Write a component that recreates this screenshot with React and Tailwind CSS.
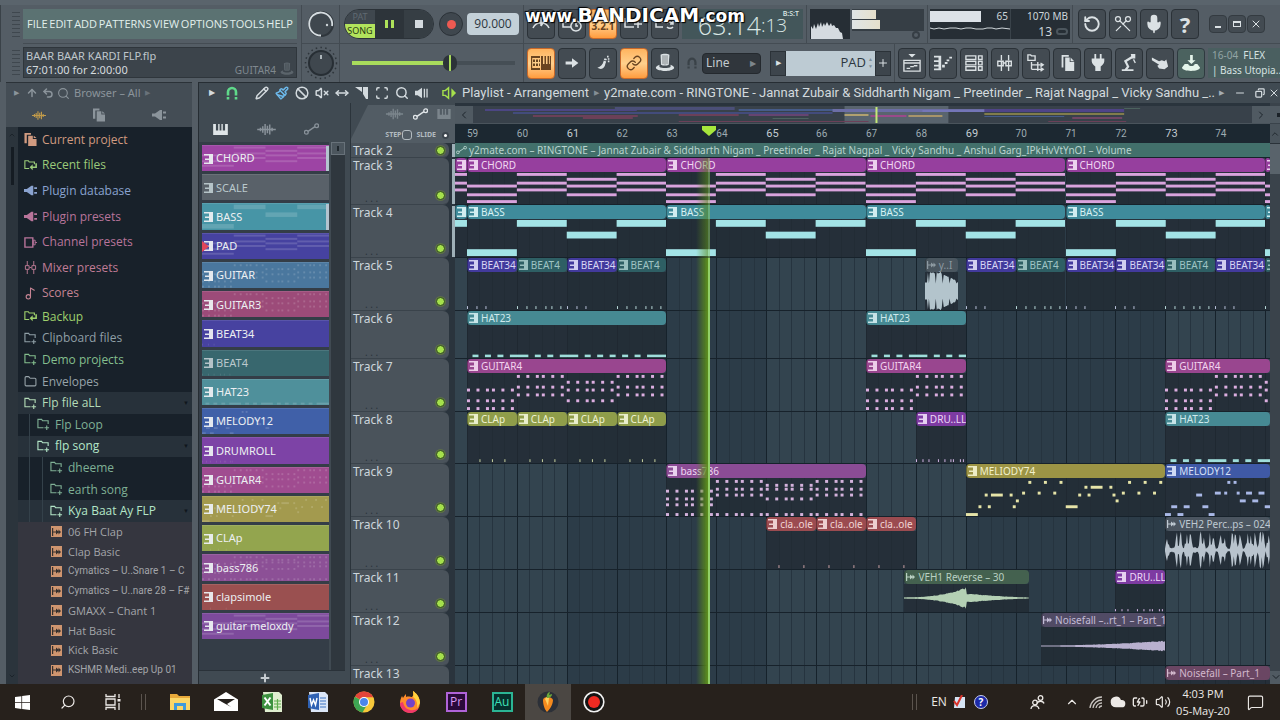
import React, { useState } from 'react';
import {
    Search, Pencil, Ban, VolumeX, MoveHorizontal, Scan, Volume1, Volume2, Undo2, ArrowUp,
    RotateCw, Scissors, Mic, Link, Plus, Minus, X, Copy, ChevronUp, ChevronDown, ChevronLeft, ChevronRight, Music2, Folder,
    Paintbrush, MessageSquare, Cloud, BatteryCharging
} from 'lucide-react';

/* ---------- timeline data ---------- */

const FIRST_BAR = 58.76;
const BARS_SHOWN = 16.34;
const pct = (bars) => `${(bars / BARS_SHOWN) * 100}%`;
const barLeft = (bar) => pct(bar - FIRST_BAR);

const STEPS = [0, 0.19, 0.38, 0.5, 0.69, 0.88];

// Each pattern is a list of [bar offset, length in bars, y, height]
const block = (rows, height) => rows.flatMap((ys, bar) => ys.map((y) => [bar, 1, y, height]));
const dots = (rows) => rows.flatMap((ys, bar) => STEPS.flatMap((s) => ys.map((y) => [bar + s, 0.06, y, 3])));
const ticks = (times) => times.map((x) => [x, 0.02, 35, 3]);
const steps = (list) => list.map(([s, len, y]) => [s / 16, (len * 0.95) / 16, y, 3]);

const HAT_HITS = [0.11, 0.36, 0.61, 1.36, 1.61, 2.36, 2.61, 2.86, 3.11, 3.36].map((x) => [x, 0.12, 35, 3])
    .concat([[0.86, 0.37, 35, 3], [1.86, 0.37, 35, 3], [3.61, 0.39, 35, 3]]);

const NOTES = {
    chord: block([[13, 22, 29], [1, 10, 17], [6, 13, 22], [1, 10, 17]], 3),
    bass: block([[31], [1], [13], [1]], 7),
    beat34: ticks([0, 0.19, 0.37]),
    beat4: ticks([0, 0.19, 0.37, 0.57, 0.69, 0.87]),
    hat: HAT_HITS,
    guitar4: dots([[16, 27, 35], [2, 13, 21], [8, 16, 27], [2, 13, 21]]),
    clap: ticks([0.25, 0.5, 0.75]),
    drum: ticks([0, 0.13, 0.25, 0.44, 0.57, 0.69, 0.74, 0.88, 0.94]),
    bass786: dots([[12, 20, 26, 36], [2, 10, 16, 36], [6, 10, 20, 36], [2, 10, 16, 36]]),
    clapsimole: ticks([0.25, 0.75]),
    melody74: steps([
        [0, 4, 36], [4, 1, 28], [6, 1, 16], [7, 1, 28], [8, 4, 16], [14, 1, 16], [15, 1, 28], [16, 1, 22], [18, 1, 14], [20, 1, 3],
        [23, 1, 14], [25, 1, 3], [28, 1, 14], [30, 1, 3], [32, 4, 28], [36, 1, 16], [38, 1, 8], [39, 1, 16], [40, 4, 8], [46, 1, 8],
        [47, 1, 16], [48, 1, 22], [50, 1, 14], [52, 1, 3], [55, 1, 14], [57, 1, 3], [60, 1, 14], [62, 1, 3]
    ]),
    melody12: steps([
        [0, 2, 36], [2, 2, 28], [4, 2, 36], [6, 2, 28], [10, 2, 16], [12, 2, 28], [14, 2, 36], [16, 2, 14], [19, 1, 14], [20, 1, 3],
        [22, 1, 3], [23, 1, 14], [24, 2, 22], [26, 2, 14], [28, 2, 22], [30, 2, 14], [32, 2, 28]
    ]),
    none: []
};

const KINDS = {
    chord: { label: 'CHORD', head: 'bg-[#963f9e]', note: '#d9a3dd', notes: NOTES.chord, view: 33, text: 'text-[#f0d8f2]' },
    bass: { label: 'BASS', head: 'bg-[#3f8b9b]', note: '#a3e3e6', notes: NOTES.bass, text: 'text-[#d8f2f4]' },
    beat34: { label: 'BEAT34', head: 'bg-[#423a9c]', note: '#b8c0d8', notes: NOTES.beat34, text: 'text-[#d8d6f4]' },
    beat4: { label: 'BEAT4', head: 'bg-[#2e5f64]', note: '#b8d8d8', notes: NOTES.beat4, text: 'text-[#9fc4c4]' },
    hat: { label: 'HAT23', head: 'bg-[#468993]', note: '#9fdedb', notes: NOTES.hat, text: 'text-[#cfe9ec]' },
    guitar4: { label: 'GUITAR4', head: 'bg-[#99468f]', note: '#dcaee0', notes: NOTES.guitar4, text: 'text-[#f2d4ee]' },
    clap: { label: 'CLAp', head: 'bg-[#8f9d4a]', note: '#c9d3a0', notes: NOTES.clap, text: 'text-[#eef2d2]' },
    drum: { label: 'DRU..LL', head: 'bg-[#7d3ba2]', note: '#d2b4e4', notes: NOTES.drum, text: 'text-[#ecd8f6]' },
    bass786: { label: 'bass786', head: 'bg-[#8b4c95]', note: '#d4b2dc', notes: NOTES.bass786, text: 'text-[#eed8f2]' },
    clapsimole: { label: 'cla..ole', head: 'bg-[#9b4b50]', note: '#c9a0a4', notes: NOTES.clapsimole, text: 'text-[#f2d6d6]' },
    melody74: { label: 'MELIODY74', head: 'bg-[#9c9445]', note: '#e6e4a8', notes: NOTES.melody74, text: 'text-[#f2f0cc]' },
    melody12: { label: 'MELODY12', head: 'bg-[#3f59a6]', note: '#a9b8e6', notes: NOTES.melody12, text: 'text-[#d6e0f8]' },
    vocal: { label: 'y..I', head: 'bg-[#4a565f]', note: '#b3c4cc', audio: 'vocal', text: 'text-[#8d9aa2]' },
    reverse: { label: 'VEH1 Reverse – 30', head: 'bg-[#44614f]', note: '#b4d0b4', audio: 'reverse', text: 'text-[#b9d0c2]' },
    noise: { label: 'Noisefall –..rt_1 – Part_1', head: 'bg-[#514b65]', note: '#b9b1cf', audio: 'noise', text: 'text-[#c3bcd6]' },
    noise2: { label: 'Noisefall – Part_1', head: 'bg-[#6a4663]', note: '#cfb1c9', audio: 'noise', text: 'text-[#d2b8cc]' },
    perc: { label: 'VEH2 Perc..ps – 024', head: 'bg-[#4b5560]', note: '#b8c3cd', audio: 'perc', text: 'text-[#bfc9d2]' }
};

// [kind, start bar, length in bars, offset into the pattern]
const loop4 = (kind) => [
    [kind, FIRST_BAR, 0.24, 3.76], [kind, 59, 4], [kind, 63, 4], [kind, 67, 4], [kind, 71, 4], [kind, 75, 0.1]
];

const TRACKS = [
    { name: 'Track 2', height: 'h-[15px]', selected: true, clips: [] },
    { name: 'Track 3', height: 'h-[47px]', selected: true, clips: loop4('chord') },
    { name: 'Track 4', height: 'h-[53px]', selected: true, clips: loop4('bass') },
    {
        name: 'Track 5', height: 'h-[53px]', clips: [
            ['beat34', 59, 1], ['beat4', 60, 1], ['beat34', 61, 1], ['beat4', 62, 1], ['vocal', 68.18, 0.67], ['beat34', 69, 1],
            ['beat4', 70, 1], ['beat34', 71, 1], ['beat34', 72, 1], ['beat4', 73, 1], ['beat34', 74, 1], ['beat4', 75, 0.1]
        ]
    },
    { name: 'Track 6', height: 'h-[48px]', clips: [['hat', 59, 4], ['hat', 67, 2]] },
    { name: 'Track 7', height: 'h-[53px]', clips: [['guitar4', 59, 4], ['guitar4', 67, 2], ['guitar4', 73, 2.1]] },
    {
        name: 'Track 8', height: 'h-[52px]', clips: [
            ['clap', 59, 1], ['clap', 60, 1], ['clap', 61, 1], ['clap', 62, 1], ['drum', 68, 1], ['hat', 73, 2.1]
        ]
    },
    { name: 'Track 9', height: 'h-[53px]', clips: [['bass786', 63, 4], ['melody74', 69, 4], ['melody12', 73, 2.1]] },
    { name: 'Track 10', height: 'h-[53px]', clips: [['clapsimole', 65, 1], ['clapsimole', 66, 1], ['clapsimole', 67, 1], ['perc', 73, 2.1]] },
    { name: 'Track 11', height: 'h-[43px]', clips: [['reverse', 67.77, 2.5], ['drum', 72, 1]] },
    { name: 'Track 12', height: 'h-[53px]', clips: [['noise', 70.51, 2.49]] },
    { name: 'Track 13', height: 'h-[53px]', clips: [['noise2', 73, 2.1]] }
];

const PATTERNS = [
    { name: 'CHORD', color: 'bg-[#9d44a4]', notes: NOTES.chord, selected: true },
    { name: 'SCALE', color: 'bg-[#596169]', notes: NOTES.none, dim: true },
    { name: 'BASS', color: 'bg-[#4795a6]', notes: NOTES.bass, selected: true },
    { name: 'PAD', color: 'bg-[#4642a0]', notes: NOTES.chord },
    { name: 'GUITAR', color: 'bg-[#4a779e]', notes: NOTES.guitar4 },
    { name: 'GUITAR3', color: 'bg-[#9c4b79]', notes: NOTES.guitar4 },
    { name: 'BEAT34', color: 'bg-[#4742a0]', notes: NOTES.beat34 },
    { name: 'BEAT4', color: 'bg-[#38676e]', notes: NOTES.beat4, dim: true },
    { name: 'HAT23', color: 'bg-[#4f909b]', notes: NOTES.hat },
    { name: 'MELODY12', color: 'bg-[#4060a8]', notes: NOTES.melody12 },
    { name: 'DRUMROLL', color: 'bg-[#7d43a6]', notes: NOTES.drum },
    { name: 'GUITAR4', color: 'bg-[#a04c90]', notes: NOTES.guitar4 },
    { name: 'MELIODY74', color: 'bg-[#a39a4e]', notes: NOTES.melody74 },
    { name: 'CLAp', color: 'bg-[#93a54e]', notes: NOTES.clap },
    { name: 'bass786', color: 'bg-[#8c5096]', notes: NOTES.bass786 },
    { name: 'clapsimole', color: 'bg-[#9a5050]', notes: NOTES.clapsimole },
    { name: 'guitar meloxdy', color: 'bg-[#7d4a9c]', notes: NOTES.chord }
];

/* ---------- small drawings ---------- */

const PatternIcon = ({ className = '' }) => (
    <svg viewBox="0 0 9 10" className={`relative w-[9px] h-[10px] shrink-0 ${className}`} fill="currentColor" aria-hidden="true">
        <path d="M0 0h9v10H0V8.600h5V6H1V4.400h4V1.600H0z" opacity=".95" />
    </svg>
);

const AudioIcon = ({ className = '' }) => (
    <svg viewBox="0 0 9 8" className={`w-[9px] h-2 shrink-0 ${className}`} fill="currentColor" aria-hidden="true">
        <path d="M0 0h1.200v3.400H4V1.500L6.500 3.400V1.500L9 4 6.500 6.500V4.600L4 6.500V4.600H1.200V8H0z" />
    </svg>
);

const PianoIcon = ({ className = '' }) => (
    <svg viewBox="0 0 16 12" className={className} fill="currentColor" aria-hidden="true">
        <path d="M0 0h3v7h2.500V0h1.500v7h2V0h1.500v7H13V0h3v12H0z" />
    </svg>
);

const WaveIcon = ({ className = '' }) => (
    <svg viewBox="0 0 20 14" className={className} stroke="currentColor" strokeWidth="1.600" aria-hidden="true">
        <path d="M0 7h20M3.500 5v4M6 3.500v7M8.500 1v12M11 3v8M13.500 1.500v11M16 5v4" />
    </svg>
);

const CurveIcon = ({ className = '' }) => (
    <svg viewBox="0 0 16 12" className={className} stroke="currentColor" strokeWidth="1.400" fill="none" aria-hidden="true">
        <circle cx="2.500" cy="9.500" r="2" />
        <circle cx="13.500" cy="2.500" r="2" />
        <path d="M4.300 8.500 11.700 3.500" />
    </svg>
);

const PlugIcon = ({ className = '' }) => (
    <svg viewBox="0 0 14 12" className={className} fill="currentColor" aria-hidden="true">
        <path d="M0 4.500h3L8 1h2v10H8L3 7.500H0zM11 2.500h3v2h-3zM11 7.500h3v2h-3z" />
    </svg>
);

const MixerIcon = ({ className = '' }) => (
    <svg viewBox="0 0 14 14" className={className} stroke="currentColor" fill="none" aria-hidden="true">
        <path d="M3.500 0v5M3.500 9v5M10.500 0v5M10.500 9v5M6 7h2M1.500 5h4v4h-4zM8.500 5h4v4h-4z" />
    </svg>
);

const ChannelIcon = ({ className = '' }) => (
    <svg viewBox="0 0 14 12" className={className} stroke="currentColor" strokeWidth="1.500" fill="none" aria-hidden="true">
        <path d="M1 1h8.500v10H1z" />
        <path d="M10 3.500h2v5h-2zM12 6h2" strokeWidth="1" />
    </svg>
);

const DocsIcon = ({ className = '' }) => (
    <svg viewBox="0 0 13 14" className={className} fill="currentColor" aria-hidden="true">
        <path d="M0 0h7v2H2.500v9H0zM4 3h5v3.500h4V14H4zM10 3l3 2.500h-3z" />
    </svg>
);

const FolderLinkIcon = ({ className = '' }) => (
    <svg viewBox="0 0 15 13" className={className} fill="none" stroke="currentColor" strokeWidth="1.300" aria-hidden="true">
        <path d="M6 10H1V1h4l1 1.500h6V5" />
        <path d="M14 4v4.500H9" strokeWidth="1.800" />
        <path d="M10 5v7L6.500 8.500z" fill="currentColor" stroke="none" />
    </svg>
);

const FolderPlusIcon = ({ className = '' }) => (
    <svg viewBox="0 0 14 13" className={className} fill="none" stroke="currentColor" strokeWidth="1.200" aria-hidden="true">
        <path d="M7 10H1V1h4l1 1.500h6V6M10.500 7.500v5M8 10h5" />
    </svg>
);

const MagnetIcon = ({ className = '' }) => (
    <svg viewBox="0 0 14 14" className={className} fill="none" stroke="currentColor" strokeWidth="2.600" aria-hidden="true">
        <path d="M3 9.500V6a4 4 0 0 1 8 0v3.500M3 11v2.500M11 11v2.500" />
    </svg>
);

const KnifeIcon = ({ className = '' }) => (
    <svg viewBox="0 0 14 14" className={className} fill="currentColor" aria-hidden="true">
        <path d="M0 1h7v5zM8 1h5v12h-2L8 8z" />
    </svg>
);

const PlaybackIcon = ({ className = '' }) => (
    <svg viewBox="0 0 16 14" className={className} fill="currentColor" aria-hidden="true">
        <path d="M0 4.500h3L8 1v12L3 9.500H0zM10 2h1.500v10H10zM13 2h1.500v10H13z" />
    </svg>
);

const MonitorIcon = ({ className = '' }) => (
    <svg viewBox="0 0 16 14" className={className} fill="none" stroke="currentColor" strokeWidth="1.500" aria-hidden="true">
        <path d="M1 4.500h2.500L7 1.500v11L3.500 9.500H1z" />
        <path d="M10 2l5 5-5 5z" fill="currentColor" stroke="none" />
    </svg>
);

const TopHat = ({ className = '' }) => (
    <svg viewBox="0 0 18 18" className={className} fill="currentColor" aria-hidden="true">
        <path d="M5 1.500c2-1 6-1 8 0l-.6 9c-2 1-5 1-7 0z" />
        <path d="M4 10.500C1 11.500.3 13 1 14c2 3 14 3 16 0 .7-1 0-2.500-3-3.500v2c-2 1.200-8 1.200-10 0z" />
        <path d="M7.200 2v8M9 2v8.500M10.800 2v8" stroke="#3a4147" strokeWidth=".5" />
    </svg>
);

const TOOL_DRAWINGS = {
    metronome: <path d="M2 14C5 7 15 7 18 14M10 12V3M10 12l5-8" fill="none" />,
    wait: <path d="M1 4v9h8M4 4v5M7 4v5M14 7a5 5 0 1 1-.1 0M14 9v3h2" fill="none" />,
    step: <path d="M1 4v9h9M4 4v5M7 4v5M14 6v8M10 10h8" fill="none" />,
    loop: <path d="M1 4v9h7M4 4v5M7 4v5M12 9a4 4 0 0 1 6 1M18 13a4 4 0 0 1-6 0M18 7v3h-3" fill="none" />,
    typing: (
        <g fill="currentColor" stroke="none">
            <path d="M0 3h9v2H0zM0 15h9v2H0zM0 3h1.200v14H0zM2 6.500h2V9H2zM5 6.500h2V9H5zM2 10.500h2V13H2zM5 10.500h2V13H5zM8 6.500h1V9H8zM8 10.500h1V13H8z" />
            <path d="M10 3h2v8h1.500V3h1.500v8h1.500V3H18v8h.8V3H20v14H10z" />
        </g>
    ),
    arrow: <path d="M2 8h8V4l8 6-8 6v-4H2z" fill="currentColor" stroke="none" />,
    slide: (
        <g fill="currentColor" stroke="none">
            <path d="M3 16c5 3 9 1 10-5l1-3-3-1c-1 5-4 8-8 9z" />
            <path d="M11 6l1-2 3 1-1 2zM16 7h2v2h-2zM16 4h2v2h-2zM15 1h2v2h-2z" />
        </g>
    ),
    playlist: (
        <g>
            <path d="M1 7h18v12H1zM1 10h18M4 16h4M8 14h4M12 13h4" fill="none" />
            <path d="M6 0h8l-4 4z" fill="currentColor" stroke="none" />
        </g>
    ),
    pianoroll: (
        <g fill="currentColor" stroke="none">
            <path d="M0 2h8v16H0v-2h5v-2H0v-2h5V9H0V7h5V4H0zM9 12h3v3H9zM12 9h3v2h-3zM14 6h3v2h-3zM17 3h3v2h-3z" />
        </g>
    ),
    rack: <path d="M1 2h11v4H1zM1 8h11v4H1zM1 14h11v4H1zM15 2h4v4h-4zM15 8h4v4h-4zM15 14h4v4h-4z" fill="none" />,
    mixer: <path d="M6 1v6M6 13v6M14 1v6M14 13v6M2 8h6v5H2zM11 8h6v5h-6zM6 8v5M14 8v5M8 10h3" fill="none" />,
    tree: <path d="M1 1h3l1 1h4v5H1zM5 9v8M5 12h13M5 17h13M12 9v10M15 10l3 2-3 2M15 15l3 2-3 2" fill="none" />,
    docs: <path d="M4 1h8v2H6v12H4zM8 4h5v5h5v10H8zM14 4l4 4h-4z" fill="currentColor" stroke="none" />,
    plug: <path d="M6 0h2v5h4V0h2v5h3v3c0 3-3 5-4 6v5H7v-5c-1-1-4-3-4-6V5h3z" fill="currentColor" stroke="none" />,
    robot: (
        <g>
            <path d="M14 3 6 8l3 6-3 4" fill="none" strokeWidth="2.500" />
            <path d="M12 0h5v5h-4zM2 17h13v2H2z" fill="currentColor" stroke="none" />
            <path d="M15 6l2 4" fill="none" />
        </g>
    ),
    hand: <path d="M1 4l8 4 3-1 3 1 2-2 2 8-4 3-6-1-2-3 2-1-8-5z" fill="currentColor" stroke="none" />,
    download: <path d="M9 1h3v6h3l-4.500 4L6 7h3zM3 11h4c0 3 7 3 7 0h3l3 4c0 5-20 5-20 0z" fill="currentColor" stroke="none" />
};

const ToolIcon = ({ name, className = 'w-5 h-5' }) => (
    <svg viewBox="0 0 20 20" className={className} stroke="currentColor" strokeWidth="1.500" aria-hidden="true">
        {TOOL_DRAWINGS[name]}
    </svg>
);

/* ---------- top toolbar ---------- */

const ToolButton = ({ label, active, teal, children, row = 2 }) => (
    <button
        aria-label={label}
        className={`w-7 shrink-0 flex items-center justify-center rounded-sm border ${row === 1 ? 'h-[30px]' : 'h-[31px]'} ${active
            ? 'bg-gradient-to-b from-[#ffb45e] via-[#ffd08c] to-[#ff9c3c] border-[#c8692a] text-[#6a4420]'
            : teal
                ? 'bg-[#4b625f] border-[#2f3a40] text-[#e4f4ea]'
                : 'bg-[#434b52] border-[#2b3238] text-[#dbe1e4]'}`}
    >
        {children}
    </button>
);

const Grip = () => (
    <div className="flex flex-col gap-[3px] px-[3px]">
        {[0, 1, 2, 3, 4, 5, 6].map((n) => <div key={n} className="h-px w-2 bg-[#3f474e]" />)}
    </div>
);

const MENU = ['FILE', 'EDIT', 'ADD', 'PATTERNS', 'VIEW', 'OPTIONS', 'TOOLS', 'HELP'];

const Knob = ({ ring }) => (
    <svg viewBox="0 0 34 34" className="w-[34px] h-[34px]" aria-hidden="true">
        {!ring && <circle cx="17" cy="17" r="15.500" fill="none" stroke="#2e353b" strokeWidth="1.500" strokeDasharray="1.500 3.300" />}
        <circle cx="17" cy="17" r="12" fill="#3f474e" stroke={ring ? '#2f363c' : '#272e34'} strokeWidth="2" />
        {ring && <path d="M17 28.500A11.500 11.500 0 1 1 28 19" fill="none" stroke="#d5dce0" strokeWidth="1.800" />}
        {ring ? <circle cx="23" cy="18" r="1.200" fill="#cdd4d8" /> : <path d="M17 9v4" stroke="#d5dce0" strokeWidth="1.500" />}
    </svg>
);

const Transport = () => (
    <div className="flex items-center h-full pl-1 pr-[4px]">
        <div className="flex h-[30px] rounded-l-2xl rounded-r-2xl overflow-hidden border border-[#2b3238]">
            <div className="w-[30px] flex flex-col text-[9px] leading-[14px] text-center">
                <button className="flex-1 bg-[#3f474e] text-[#5f6a72]">PAT</button>
                <button className="flex-1 bg-[#b2e35c] text-[#2a3a14]">SONG</button>
            </div>
            <button aria-label="Pause" className="w-[29px] bg-[#2d343a] flex items-center justify-center gap-[3px]">
                <span className="w-[3px] h-2 bg-[#aee25a]" />
                <span className="w-[3px] h-2 bg-[#aee25a]" />
            </button>
            <button aria-label="Stop" className="w-[29px] bg-[#363e44] flex items-center justify-center">
                <span className="w-2 h-2 bg-[#d4dade]" />
            </button>
        </div>
        <button aria-label="Record" className="ml-[5px] w-6 h-6 shrink-0 rounded-full bg-[#3f474e] border border-[#2b3238] flex items-center justify-center">
            <span className="w-[9px] h-[9px] rounded-full bg-[#ee5a52]" />
        </button>
        <label className="ml-1 flex h-[22px] min-w-0 flex-1 items-center rounded bg-[#c3d0d8] text-[#2c3740]">
            <span className="sr-only">Tempo</span>
            <input defaultValue="90.000" className="w-full min-w-0 bg-transparent text-center text-[12px] outline-none [font-family:'Open_Sans',sans-serif]" />
        </label>
    </div>
);

const RowOne = () => (
    <div className="flex h-[39px] items-center border-b border-[#444c53] pl-[3px]">
        <div className="flex gap-[3px]">
            <ToolButton row={1} label="Metronome"><ToolIcon name="metronome" /></ToolButton>
            <ToolButton row={1} label="Wait for input"><ToolIcon name="wait" /></ToolButton>
            <ToolButton row={1} label="Countdown" active><span className="text-[10px] font-bold pt-1">3.2.1</span></ToolButton>
            <ToolButton row={1} label="Step edit"><ToolIcon name="step" /></ToolButton>
            <ToolButton row={1} label="Loop record"><ToolIcon name="loop" /></ToolButton>
        </div>
        <div className="relative ml-[3px] flex h-[30px] w-[121px] items-end justify-center bg-[#43565a] text-[#dbe8e6] [font-family:'Open_Sans',sans-serif] font-light">
            <span className="text-[25px] leading-7">63:14</span>
            <span className="text-[19px] leading-7">:13</span>
            <span className="absolute right-1 top-0 text-[7px] leading-[10px] font-semibold">B:S:T</span>
        </div>
        <div className="ml-[3px] border-l border-[#434b52] pl-[3px] flex h-full items-center gap-0.5">
            <svg viewBox="0 0 40 30" className="w-[40px] h-[30px] bg-[#262e35]" aria-label="Scope">
                <path d="M1 30V17l2 3 1-5 2 5 2-6 1 4 2-5 1 5 2-4 1 3 2-4 2 4 2-3 1 3 2-1 2 3 2 0 2 4 2 1 1 6z" fill="#d5dbe0" />
            </svg>
            <div className="flex h-[30px] flex-col">
                <div className="flex h-[22px] w-[72px] flex-col gap-px bg-[#363e45] py-px">
                    <div className="h-[9px] w-6 bg-gradient-to-r from-[#dfe4e6] to-[#e6e0cc]" />
                    <div className="h-[9px] w-7 bg-gradient-to-r from-[#dfe4e6] to-[#e6e0cc]" />
                </div>
                <div className="mr-1 ml-auto h-2 w-2 rounded-full border-2 border-[#363e45]" />
            </div>
        </div>
        <div className="ml-[3px] border-l border-[#434b52] pl-[2px] flex h-full items-center">
            <div className="flex h-[30px] w-[140px] bg-[#262e35] text-[#ccd5da] text-[10px] leading-[15px]">
                <div className="w-[80px]">
                    <div className="flex h-[14px] items-center justify-between pr-[2px]">
                        <div className="h-[11px] w-[51px] bg-[#dce2e8]" />
                        <span>65</span>
                    </div>
                    <svg viewBox="0 0 80 12" className="h-3 w-[80px]" fill="none" stroke="#cfd6da" aria-label="CPU history">
                        <path d="M0 5l4 1 5-1 5 1 6-1 6 0 5 1 5-1 5 0 5 1 7 0 4-1 5 0 4 1 6-1 8 1" />
                    </svg>
                </div>
                <div className="flex-1 border-l border-[#3a434a] pr-[2px] text-right">
                    <div>1070 MB</div>
                    <div className="flex items-center justify-end gap-1 text-[12px]">
                        13 <span className="h-[7px] w-3 rounded-full border-2 border-[#4c565d]" />
                    </div>
                </div>
            </div>
        </div>
        <div className="ml-[2px] border-l border-[#434b52] pl-[5px] flex h-full items-center gap-[3px]">
            <ToolButton row={1} label="Undo"><RotateCw className="w-[18px] h-[18px] -scale-x-100" strokeWidth={2.500} /></ToolButton>
            <ToolButton row={1} label="Cut"><Scissors className="w-5 h-5 rotate-90" strokeWidth={1.500} /></ToolButton>
            <ToolButton row={1} label="Record audio"><Mic className="w-5 h-5" fill="currentColor" /></ToolButton>
            <ToolButton row={1} label="Help"><span className="text-[22px] font-bold">?</span></ToolButton>
        </div>
        <div className="ml-[10px] flex gap-px text-[#dbe1e4]">
            <button aria-label="Minimize" className="flex w-[18px] h-[18px] items-end justify-center rounded-sm border border-[#343b41] bg-[#434b52] pb-1"><span className="h-0.5 w-[6px] bg-current" /></button>
            <button aria-label="Restore" className="flex w-[18px] h-[18px] items-center justify-center rounded-sm border border-[#343b41] bg-[#434b52]"><span className="h-[6px] w-2 border border-current border-t-2" /></button>
            <button aria-label="Close" className="flex w-[18px] h-[18px] items-center justify-center rounded-sm border border-[#343b41] bg-[#434b52]"><X className="w-3 h-3" /></button>
        </div>
    </div>
);

const WINDOW_TOOLS = [
    ['playlist', 'Playlist'], ['pianoroll', 'Piano roll'], ['rack', 'Channel rack'], ['mixer', 'Mixer'], ['tree', 'Browser'],
    ['docs', 'Plugin picker'], ['plug', 'Plugins'], ['robot', 'Tempo tapper'], ['hand', 'Touch controllers']
];

const RowTwo = () => (
    <div className="flex h-[38px] items-center pl-[3px]">
        <div className="flex gap-[3px]">
            <ToolButton label="Typing keyboard to piano" active><ToolIcon name="typing" /></ToolButton>
            <ToolButton label="Auto scroll"><ToolIcon name="arrow" className="w-4 h-4" /></ToolButton>
            <ToolButton label="Slide"><ToolIcon name="slide" className="w-4 h-4" /></ToolButton>
            <ToolButton label="Link controllers" active><Link className="w-4 h-4" /></ToolButton>
            <ToolButton label="Multilink"><TopHat className="w-5 h-5" /></ToolButton>
        </div>
        <MagnetIcon className="ml-[7px] w-3 h-3 text-[#3a4248]" />
        <label className="relative ml-[4px] flex h-[21px] w-[59px] items-center rounded-sm border border-[#24292e] bg-[#30363c]">
            <span className="sr-only">Snap</span>
            <select className="w-full appearance-none bg-transparent pl-[3px] text-[12px] text-[#c3cacf] outline-none"><option>Line</option></select>
            <span className="pointer-events-none absolute right-1 text-[8px] text-[#7d868d]">▶</span>
        </label>
        <button aria-label="Patterns menu" className="ml-[9px] w-4 h-[25px] border border-[#2b3238] bg-[#3d454c] text-[7px] text-[#dbe1e4]">▶</button>
        <label className="relative flex h-[25px] w-[89px] items-center bg-[#bdcbd3]">
            <span className="sr-only">Pattern</span>
            <select className="w-full appearance-none bg-transparent pr-[9px] text-right [text-align-last:right] text-[13px] text-[#2c3740] outline-none [font-family:'Open_Sans',sans-serif]"><option>PAD</option></select>
            <span className="pointer-events-none absolute right-0.5 flex flex-col text-[5px] leading-[7px] text-[#7f8f99]"><span>▲</span><span>▼</span></span>
        </label>
        <button aria-label="Add pattern" className="flex w-4 h-[25px] items-center justify-center border border-[#2b3238] bg-[#3d454c] text-[#dbe1e4]"><Plus className="w-3 h-3" /></button>
        <div className="ml-[3px] border-l border-[#434b52] pl-[3px] flex h-full items-center gap-[3px]">
            {WINDOW_TOOLS.map(([name, label]) => <ToolButton key={name} label={label}><ToolIcon name={name} className="w-[18px] h-[18px]" /></ToolButton>)}
            <ToolButton label="Download content" teal><ToolIcon name="download" className="w-[18px] h-[18px]" /></ToolButton>
        </div>
        <div className="ml-[3px] h-[30px] min-w-0 flex-1 overflow-hidden whitespace-nowrap bg-[#4a5f60] pl-1 text-[10px] leading-[15px] text-[#d6e2e0]">
            <div><span className="text-[#93a5a5]">16-04</span>&nbsp; FLEX</div>
            <div>| Bass Utopia..</div>
        </div>
    </div>
);

const TopBar = () => (
    <header className="relative flex bg-[#545d65] border-t-[5px] border-[#5a646c] h-[82px] shrink-0 [font-family:'Noto_Sans','Open_Sans',sans-serif]">
        <div className="flex w-[23px] flex-col justify-around items-end border-l border-[#3a4248]"><Grip /><Grip /></div>
        <div className="flex w-[274px] shrink-0 flex-col">
            <div className="flex h-[39px] items-center border-b border-[#444c53]">
                <nav className="flex h-[30px] flex-1 items-center justify-between bg-[#5b7272] px-1 text-[11px] text-[#e2efec] [font-family:'Open_Sans',sans-serif]">
                    {MENU.map((item) => <button key={item}>{item}</button>)}
                </nav>
            </div>
            <div className="mt-[3px] flex h-[31px] items-end justify-between border border-[#2f363c] bg-[#3c444b] px-[2px] text-[11px] leading-[14px]">
                <div className="text-[#bfc6cb]">
                    <div>BAAR BAAR KARDI FLP.flp</div>
                    <div className="text-[#d5dbdf]">67:01:00 for 2:00:00</div>
                </div>
                <div className="flex items-end gap-1 text-[10px] text-[#7f888f]">GUITAR4 <TopHat className="w-[14px] h-4 text-[#5b646b]" /></div>
            </div>
        </div>
        <div className="ml-1 flex w-[39px] shrink-0 flex-col items-center border-x border-[#434b52]">
            <div className="flex h-[39px] w-full items-center justify-center border-b border-[#444c53]"><Knob ring /></div>
            <div className="flex h-[38px] items-center"><Knob /></div>
        </div>
        <div className="w-[184px] shrink-0 border-r border-[#434b52]">
            <div className="h-[39px] border-b border-[#444c53]"><Transport /></div>
            <label className="relative flex h-[38px] items-center pl-3 pr-2">
                <span className="sr-only">Main pitch</span>
                <input type="range" defaultValue={61} className="h-1 w-full appearance-none bg-[linear-gradient(to_right,#a9dc5c_60%,#454e55_60%)] [&::-webkit-slider-thumb]:appearance-none [&::-webkit-slider-thumb]:w-[14px] [&::-webkit-slider-thumb]:h-[16px] [&::-webkit-slider-thumb]:rounded-full [&::-webkit-slider-thumb]:bg-[linear-gradient(to_right,#2c3338_6px,#a9dc5c_6px,#a9dc5c_8px,#2c3338_8px)]" />
            </label>
        </div>
        <div className="min-w-0 flex-1"><RowOne /><RowTwo /></div>
        {/* Recorder watermark */}
        <div className="absolute left-[525px] top-0 flex items-baseline leading-5 font-bold text-white [font-family:'DejaVu_Sans',sans-serif] [text-shadow:0_0_2px_#000,1px_1px_1px_#000,-1px_-1px_1px_#000]">
            <span className="text-[17px]">www.</span>
            <span className="text-[20px]">BANDICAM</span>
            <span className="text-[17px]">.com</span>
        </div>
    </header>
);

/* ---------- browser ---------- */

const ROOT_ROWS = [
    ['Current project', DocsIcon, 'text-[#d09a80]'],
    ['Recent files', FolderLinkIcon, 'text-[#9bcb7a]'],
    ['Plugin database', PlugIcon, 'text-[#8aa3d0]'],
    ['Plugin presets', PlugIcon, 'text-[#b8749a]'],
    ['Channel presets', ChannelIcon, 'text-[#b8749a]'],
    ['Mixer presets', MixerIcon, 'text-[#c07c96]'],
    ['Scores', Music2, 'text-[#c58494]']
];

const FOLDER_ROWS = [
    ['Backup', FolderLinkIcon, 'text-[#9ed06c]', 0],
    ['Clipboard files', FolderPlusIcon, 'text-[#8f9fa6]', 0],
    ['Demo projects', FolderPlusIcon, 'text-[#84bf8e]', 0],
    ['Envelopes', Folder, 'text-[#97a3a9]', 0],
    ['Flp file aLL', FolderPlusIcon, 'text-[#b4dcb8]', 0, true],
    ['Flp Loop', FolderPlusIcon, 'text-[#7fb095]', 1],
    ['flp song', FolderPlusIcon, 'text-[#b4e6c8]', 1, true],
    ['dheeme', FolderPlusIcon, 'text-[#7fb095]', 2],
    ['earth song', FolderPlusIcon, 'text-[#7fb095]', 2],
    ['Kya Baat Ay FLP', FolderPlusIcon, 'text-[#b4e6c8]', 2, true]
];

const INDENT = ['pl-[6px]', 'pl-[19px]', 'pl-[32px]'];

const SAMPLES = [
    '06 FH Clap', 'Clap Basic', 'Cymatics – U..Snare 1 – C', 'Cymatics – U..nare 28 – F#', 'GMAXX – Chant 1', 'Hat Basic',
    'Kick Basic', 'KSHMR Medi..eep Up 01'
];

const Browser = () => (
    <aside className="flex w-[186px] shrink-0 flex-col border-t border-[#2b3238] bg-[#444d55]">
        <div className="flex h-5 items-center gap-1 pl-2 text-[11px] text-[#8b949b] [font-family:'Noto_Sans',sans-serif]">
            <span className="w-2 text-[7px]">▶</span>
            <ArrowUp className="w-3 h-3" strokeWidth={3} />
            <Undo2 className="w-3 h-3" strokeWidth={3} />
            <Search className="w-[13px] h-[13px] -ml-px" />
            <span>Browser – All</span>
            <span className="text-[7px] text-[#69727a]">▶</span>
        </div>
        <div className="flex h-6 items-center justify-between px-[26px] text-[#8b949b]">
            <button aria-label="Audio"><WaveIcon className="w-[14px] h-[11px] text-[#c09a4a]" /></button>
            <button aria-label="Files"><DocsIcon className="w-3 h-[14px]" /></button>
            <button aria-label="Plugins"><PlugIcon className="w-[14px] h-3" /></button>
        </div>
        <div className="flex min-h-0 flex-1">
            <div className="flex w-3 shrink-0 flex-col items-center justify-between bg-[#2b343c] py-1 text-[#1b232a]">
                <div><ChevronUp className="w-2 h-2" strokeWidth={3} /><div className="mx-auto mt-2 h-[38px] w-[3px] bg-[#151c23]" /></div>
                <ChevronDown className="w-2 h-2" strokeWidth={3} />
            </div>
            <div className="min-w-0 flex-1 overflow-hidden bg-[#18212a] text-[12px] leading-4 [font-family:'Open_Sans',sans-serif]">
                <ul className="flex h-[179px] flex-col">
                    {ROOT_ROWS.map(([name, Icon, color]) => (
                        <li key={name} className={`flex flex-1 items-center gap-[5px] pl-[6px] ${color}`}><Icon className="w-[13px] h-[13px]" />{name}</li>
                    ))}
                </ul>
                <ul className="flex h-[216px] flex-col">
                    {FOLDER_ROWS.map(([name, Icon, color, depth, open]) => (
                        <li key={name} className={`relative flex flex-1 items-center gap-[5px] pr-[3px] ${INDENT[depth]} ${color} ${open ? 'bg-[#27313a]' : ''}`}>
                            {/* Tree guides */}
                            {depth > 0 && <span className="absolute inset-y-0 left-[11px] w-px bg-[#34414a]" />}
                            {depth > 1 && <span className="absolute inset-y-0 left-[24px] w-px bg-[#34414a]" />}
                            <Icon className="w-[13px] h-[13px]" />{name}
                            {open && <span className="ml-auto text-[6px] text-[#0f161c]">▼</span>}
                        </li>
                    ))}
                </ul>
                <ul className="flex h-[158px] flex-col bg-[#35363f] text-[#a3a5a9]">
                    {SAMPLES.map((name) => (
                        <li key={name} className={`flex flex-1 items-center gap-[6px] whitespace-nowrap pl-[33px] ${name.length > 20 ? "text-[10px] [font-family:Roboto,sans-serif]" : 'text-[11px]'}`}>
                            <span className="flex w-[11px] h-[11px] shrink-0 items-center justify-center bg-[#cf956f] text-[#35302e]"><AudioIcon /></span>{name}
                        </li>
                    ))}
                </ul>
                <div className="h-4 bg-[#35363f]" />
            </div>
        </div>
    </aside>
);

/* ---------- playlist ---------- */

const NoteView = ({ notes, bars, offset = 0, height = 39, color, className }) => (
    <svg viewBox={`${offset * 50} 0 ${bars * 50} ${height}`} preserveAspectRatio="none" className={className} fill={color} aria-hidden="true">
        {notes.map(([x, w, y, h], i) => <rect key={i} x={x * 50} y={y} width={w * 50} height={h} />)}
    </svg>
);

const noise = (n) => Math.abs(Math.sin(n * 12.9898) * 43758.5453) % 1;

const PERC_HITS = [0.02, 0.11, 0.15, 0.21, 0.24, 0.34, 0.37, 0.43, 0.46, 0.53, 0.57, 0.64, 0.67, 0.72, 0.79, 0.82, 0.86, 0.91, 0.94, 0.99];

// Amplitude at position t (0..1) for each kind of audio clip
const AMPLITUDE = {
    vocal: (t, n) => (t < 0.07 ? 0.45 : n % 7 === 4 ? 0.4 : t < 0.5 ? 0.92 + noise(n) * 0.1 : 0.85 - (t - 0.5) * 0.9 + noise(n) * 0.1),
    reverse: (t, n) => (t < 0.5 ? 0.06 + Math.pow(t * 2, 2.500) * 0.85 : 0.62 * Math.pow(1 - t, 1.500) * 1.5 + 0.05) * (0.85 + noise(n) * 0.2),
    noise: (t, n) => 0.08 + Math.pow(t, 1.800) * 0.8 * (0.85 + noise(n) * 0.25),
    perc: (t, n) => {
        const near = Math.min(...PERC_HITS.map((h) => Math.abs(t - h)));
        return near < 0.008 ? 0.55 + noise(n) * 0.45 : near < 0.02 ? 0.2 + noise(n) * 0.2 : 0.06 + noise(n) * 0.1;
    }
};

const WAVE_SCALE = { vocal: 20, reverse: 17, noise: 6, perc: 20 };

const AudioView = ({ kind, bars, color }) => {
    const width = Math.round(bars * 50);
    const top = [];
    const bottom = [];
    for (let i = 0; i <= width; i++) {
        const a = AMPLITUDE[kind](i / width, i) * WAVE_SCALE[kind];
        top.push(`${i},${20 - a}`);
        bottom.unshift(`${i},${20 + a}`);
    }
    return (
        <svg viewBox={`0 0 ${width} 40`} preserveAspectRatio="none" className="block h-full w-full" aria-hidden="true">
            <polygon points={top.concat(bottom).join(' ')} fill={color} />
        </svg>
    );
};

const Clip = ({ clip }) => {
    const [kind, start, bars, offset] = clip;
    const k = KINDS[kind];
    return (
        <div className="absolute inset-y-0 flex flex-col overflow-hidden" style={{ left: barLeft(start), width: pct(bars) }}>
            <div className={`flex h-[14px] shrink-0 items-center gap-[3px] overflow-hidden whitespace-nowrap rounded-sm border-l border-black/30 pl-px text-[10px] leading-[14px] ${k.head} ${k.text}`}>
                {k.audio ? <AudioIcon /> : <PatternIcon />}
                {bars > 0.3 && <span>{k.label}</span>}
            </div>
            <div className="min-h-0 flex-1 bg-[#222b33]/80">
                {k.audio
                    ? <AudioView kind={k.audio} bars={bars} color={k.note} />
                    : <NoteView notes={k.notes} bars={bars} offset={offset} height={k.view} color={k.note} className="block h-full w-full" />}
            </div>
        </div>
    );
};

const BARS = Array.from({ length: 17 }, (_, i) => 59 + i);

const GridLines = () => (
    <div className="absolute inset-0 overflow-hidden bg-[#2c3c48]">
        {[57, 65, 73].map((bar) => (
            <div key={bar} className="absolute inset-y-0 bg-[#33444f]" style={{ left: barLeft(bar), width: pct(4) }} />
        ))}
        {BARS.map((bar) => [0, 0.25, 0.5, 0.75].map((beat) => (
            <div key={bar + beat} className={`absolute inset-y-0 w-px ${beat ? 'bg-[#26343f]' : 'bg-[#16222b]'}`} style={{ left: barLeft(bar + beat) }} />
        )))}
    </div>
);

const TrackHeader = ({ track }) => (
    <div className={`flex shrink-0 ${track.height}`}>
        <div className="relative w-[98px] rounded-r-md border-b border-[#3a434b] bg-[#4a535b] pl-0.5 text-[12px] leading-[15px] text-[#cdd6db]">
            {track.name}
            {track.height !== 'h-[15px]' && <span className="absolute bottom-[3px] left-[14px] text-[10px] leading-[6px] text-[#2b343b]">. . .</span>}
            <button aria-label={`Mute ${track.name}`} className={`absolute right-1 h-[9px] w-[9px] rounded-full border border-[#2f4a20] bg-[#a5e04c] ring-1 ring-[#5d7048] ${track.height === 'h-[15px]' ? 'top-[3px]' : 'bottom-1'}`} />
        </div>
        <div className={`ml-[3px] w-[3px] ${track.selected ? 'my-px bg-[#9fb0b8]' : ''}`} />
    </div>
);

const MINIMAP = [
    [12, 3, 152, 2, '#4c4683'], [40, 6, 320, 2, '#434c7c'], [60, 9, 105, 2, '#6b4058'], [110, 11, 50, 2, '#6b4058'], [142, 1, 120, 3, '#4b4f78'],
    [206, 8, 60, 2, '#6b4058'], [206, 15, 190, 1, '#6b4058'], [266, 3, 110, 2, '#465c8a'], [276, 8, 60, 2, '#664470'], [300, 12, 36, 1, '#4c625f'],
    [360, 3, 200, 3, '#6c6ea6'], [372, 8, 24, 2, '#b0a070'], [398, 9, 36, 2, '#9a4a8a'], [436, 9, 34, 2, '#a8946a'], [450, 4, 65, 2, '#7476b8'],
    [512, 3, 140, 3, '#4f4488'], [512, 7, 140, 2, '#817c4c'], [512, 10, 80, 1, '#465c8a'], [600, 11, 50, 2, '#704664'], [576, 15, 78, 1, '#6b4058'],
    [652, 2, 16, 1, '#4c625f']
];

const AUTOMATION_TITLE = 'y2mate.com – RINGTONE – Jannat Zubair & Siddharth Nigam _ Preetinder _ Rajat Nagpal _ Vicky Sandhu _ Anshul Garg_IPkHvVtYnOI – Volume';

const Timeline = () => (
    <div className="flex min-w-0 flex-1 flex-col">
        <div className="flex h-[17px] shrink-0 items-stretch bg-[#38414a]">
            <button aria-label="Scroll left" className="w-[18px] bg-[#505a62] text-[#1d252c]"><ChevronLeft className="mx-auto w-3 h-3" /></button>
            <div className="relative flex-1">
                <svg viewBox="0 0 780 17" preserveAspectRatio="none" className="block h-full w-full" aria-label="Song overview">
                    <rect x="372" y="0" width="104" height="17" fill="#59646e" />
                    {MINIMAP.map(([x, y, w, h, fill], i) => <rect key={i} x={x} y={y} width={w} height={h} fill={fill} />)}
                    <rect x="403" y="1" width="2" height="16" fill="#c4e878" />
                </svg>
            </div>
            <button aria-label="Scroll right" className="w-[18px] bg-[#505a62] text-[#1d252c]"><ChevronRight className="mx-auto w-3 h-3" /></button>
        </div>
        <div className="relative h-5 shrink-0 overflow-hidden border-t border-[#4a545c] bg-[#1c2831] text-[10px] leading-5 text-[#9eabb2] [font-family:Roboto,sans-serif]">
            {BARS.filter((bar) => bar < 75).map((bar) => (
                <span key={bar} className={`absolute ${(bar - 61) % 4 === 0 ? 'text-[11px] text-[#c3ccd1]' : ''}`} style={{ left: barLeft(bar) }}>{bar}</span>
            ))}
            <svg viewBox="0 0 14 10" className="absolute top-0.5 -ml-[7px] h-[10px] w-[14px]" style={{ left: barLeft(63.85) }} aria-hidden="true">
                <path d="M0 0h14v4L7 10 0 4z" fill="#a6e63c" />
            </svg>
        </div>
        <div className="relative min-h-0 flex-1 overflow-hidden">
            <GridLines />
            {TRACKS.map((track, i) => (
                <div key={track.name} className={`relative border-b border-[#17222b] ${track.height}`}>
                    {i === 0 && (
                        <div className="absolute inset-0 flex items-center gap-0.5 overflow-hidden whitespace-nowrap bg-[#42706b] pl-px text-[10px] text-[#b9d4ce]">
                            <CurveIcon className="w-[11px] h-2" />{AUTOMATION_TITLE}
                        </div>
                    )}
                    {track.clips.map((clip) => <Clip key={clip[1]} clip={clip} />)}
                </div>
            ))}
            {/* Playhead, dimmed over the first two clip rows */}
            <div className="absolute top-[15px] h-[100px] w-[14px] -ml-[13px] border-r-2 border-[#92d068]/50 bg-gradient-to-r from-transparent to-[#5c8f1c]/60" style={{ left: barLeft(63.85) }} />
            <div className="absolute top-[115px] bottom-0 w-[14px] -ml-[13px] border-r-2 border-[#92d068] bg-gradient-to-r from-transparent to-[#5c8f1c]" style={{ left: barLeft(63.85) }} />
        </div>
    </div>
);

const PLAYLIST_TOOLS = [
    ['Draw', Pencil], ['Paint', Paintbrush, 'text-[#6cb8ea]'], ['Delete', Ban], ['Mute', VolumeX], ['Slip', MoveHorizontal],
    ['Slice', KnifeIcon], ['Select', Scan], ['Zoom', Search], ['Playback', PlaybackIcon]
];

const PlaylistBar = () => (
    <div className="flex h-5 shrink-0 items-center text-[#d3dade] [font-family:Roboto,'Open_Sans',sans-serif]">
        <span className="w-[18px] pl-[10px] text-[8px]">▶</span>
        <button aria-label="Snap" className="ml-[6px] w-[18px] text-[#5fd98a]"><MagnetIcon className="mx-auto w-[14px] h-[14px]" /></button>
        <div className="ml-[11px] flex">
            {PLAYLIST_TOOLS.map(([label, Icon, color = 'text-[#d3dade]']) => (
                <button key={label} aria-label={label} className={`w-5 ${color}`}><Icon className="mx-auto w-[14px] h-[14px]" strokeWidth={2.500} /></button>
            ))}
        </div>
        <MonitorIcon className="ml-[10px] w-[15px] h-[14px] shrink-0 text-[#a5e04c]" />
        <div className="ml-[5px] flex min-w-0 flex-1 items-center overflow-hidden whitespace-nowrap text-[13px]">
            Playlist - Arrangement <span className="mx-[5px] text-[7px] text-[#858e95]">▶</span>
            y2mate.com - RINGTONE - Jannat Zubair &amp; Siddharth Nigam _ Preetinder _ Rajat Nagpal _ Vicky Sandhu _..
            <span className="ml-1 text-[7px] text-[#a5adb3]">▶</span>
        </div>
        <button aria-label="Minimize playlist" className="w-4"><Minus className="mx-auto w-3 h-3" /></button>
        <button aria-label="Restore playlist" className="ml-1 w-4"><Copy className="mx-auto w-[10px] h-[10px] rotate-90" strokeWidth={3} /></button>
        <button aria-label="Close playlist" className="w-3"><X className="w-3 h-3" /></button>
    </div>
);

const Picker = () => {
    const [current, setCurrent] = useState('PAD');
    return (
        <div className="flex w-[146px] shrink-0 flex-col">
            <div className="flex h-[39px] items-center justify-between px-[14px] pt-[13px] pr-[26px]">
                <button aria-label="Patterns"><PianoIcon className="w-[15px] h-[11px] text-[#dfe5e8]" /></button>
                <button aria-label="Audio clips"><WaveIcon className="w-[19px] h-[13px] text-[#89929a]" /></button>
                <button aria-label="Automation"><CurveIcon className="w-[15px] h-3 text-[#89929a]" /></button>
            </div>
            <div className="flex min-h-0 flex-1">
                <div className="flex flex-1 flex-col gap-[3px] bg-[#343d47] pl-[3px] pt-[3px] pb-[31px]">
                    {PATTERNS.map((p) => (
                        <button
                            key={p.name}
                            onClick={() => setCurrent(p.name)}
                            className={`relative flex min-h-0 flex-1 items-center gap-[3px] overflow-hidden border-t border-white/10 pl-0.5 text-[11px] ${p.color} ${p.dim ? 'text-[#bac8cc]' : 'text-[#eceff2]'}`}
                        >
                            {/* Faint preview of the notes behind the name */}
                            <NoteView notes={p.notes} bars={4} color="#ffffff" className="absolute inset-0 h-full w-full opacity-15" />
                            <PatternIcon />
                            <span className="relative whitespace-nowrap">{p.name}</span>
                            {p.selected && <span className="absolute inset-y-0 right-0 w-[3px] bg-[#b4c4cf]" />}
                            {current === p.name && <svg viewBox="0 0 7 11" className="absolute left-0 h-[11px] w-[7px]"><path d="M0 0l7 5.500L0 11z" fill="#e2465a" /></svg>}
                        </button>
                    ))}
                </div>
                <div className="ml-[2px] w-[14px] bg-[#2f373e]">
                    <div className="flex h-[13px] items-center justify-center border border-[#68727a] bg-[#4c565e]"><span className="h-[5px] w-0.5 bg-[#20282e]" /></div>
                </div>
            </div>
            <button aria-label="New pattern" className="flex h-[14px] items-center justify-center border-t border-[#2a3239] pr-[14px] text-[#c6ccd0]"><Plus className="w-3 h-3" strokeWidth={4} /></button>
        </div>
    );
};

const Playlist = () => (
    <section className="ml-[6px] flex min-w-0 flex-1 flex-col border-l border-t border-[#262d33] bg-[#404a52]">
        <PlaylistBar />
        <div className="flex min-h-0 flex-1">
            <Picker />
            <div className="ml-[5px] flex min-w-0 flex-1 border-l border-[#2b343b] bg-[#2a343d] [font-family:'Noto_Sans','Open_Sans',sans-serif]">
                <div className="flex w-[104px] shrink-0 flex-col overflow-hidden">
                    <div className="flex h-10 shrink-0 flex-col bg-[#404a52] pt-0.5">
                        <div className="flex flex-1 flex-col justify-between bg-[#525c64] pb-[3px] pr-1 pt-[3px] [clip-path:polygon(17px_0,100%_0,100%_100%,0_100%,0_34px)]">
                            <div className="flex items-center justify-end gap-[9px] text-[#7b858c]">
                                <WaveIcon className="w-[19px] h-3" />
                                <CurveIcon className="w-[15px] h-3 text-[#e2e7ea]" />
                                <PianoIcon className="w-[14px] h-[10px]" />
                            </div>
                            <div className="flex items-center justify-end gap-1 pr-1 text-[7px] leading-[10px] font-bold text-[#b3bbc0]">
                                STEP <span className="-ml-[3px] h-[10px] w-[10px] rounded-[3px] border border-[#b3bbc0]" /> SLIDE <span className="ml-1 h-[3px] w-[3px] rounded-full bg-white ring-2 ring-[#3d464e]" />
                            </div>
                        </div>
                    </div>
                    {TRACKS.map((track) => <TrackHeader key={track.name} track={track} />)}
                </div>
                <div className="flex min-w-0 flex-1 pt-[3px]"><Timeline /></div>
                <div className="flex w-[10px] shrink-0 flex-col pt-[3px] bg-[#3a434b]">
                    <div className="flex h-[17px] items-center justify-end bg-[#505a62]"><span className="h-1 w-[3px] bg-[#1b2228]" /></div>
                    <div className="mt-px flex h-[19px] items-center bg-[#4a545c] text-[#1b2228]"><ChevronUp className="w-3 h-3" /></div>
                    <div className="h-[31px] border-t border-[#2a3239] bg-[#59636b]" />
                    <div className="mt-auto h-[13px] bg-[#505a62] text-[#1b2228]"><ChevronDown className="w-3 h-3" /></div>
                </div>
            </div>
        </div>
    </section>
);

/* ---------- taskbar ---------- */

const TASKS = [
    ['File Explorer', (
        <svg viewBox="0 0 22 20" className="w-[22px] h-5"><path d="M1 2h7l2 2h11v14H1z" fill="#e8a93a" /><path d="M1 6h20v12H1z" fill="#fbd768" /><path d="M5 18v-7h12v7h-3v-4H8v4z" fill="#3f9bdc" /></svg>
    )],
    ['Mail', (
        <svg viewBox="0 0 24 20" className="w-6 h-5"><path d="M0 7.500 12 0l12 7.500V19H0z" fill="#fff" /><path d="M3 7h18l-8 5 4 3-9-5z" fill="#25201c" /></svg>
    )],
    ['Excel', (
        <svg viewBox="0 0 22 20" className="w-[22px] h-5"><path d="M2 0h16l3 3v17H4z" fill="#dfeecf" /><path d="M1 3l11-2v17L1 16z" fill="#3d9140" /><path d="M3.500 5.500l6 8M9.500 5.500l-6 8" stroke="#fff" strokeWidth="2" /><path d="M13 9h7M13 12h7M13 15h7M16.500 7v11" stroke="#5fae4e" strokeWidth="1.200" /></svg>
    )],
    ['Word', (
        <svg viewBox="0 0 22 20" className="w-[22px] h-5"><path d="M2 0h16l3 3v17H4z" fill="#dbe6f7" /><path d="M1 3l11-2v17L1 16z" fill="#2f62b4" /><path d="M3 6l1.500 7L6.500 8l2 5L10 6" stroke="#fff" strokeWidth="1.400" fill="none" /><path d="M13 6h6M13 9h6M13 12h6M13 15h6" stroke="#3f74c4" strokeWidth="1.200" /></svg>
    )],
    ['Chrome', (
        <svg viewBox="0 0 22 22" className="w-[22px] h-[22px]"><circle cx="11" cy="11" r="10.500" fill="#f7c83a" /><path d="M11 11 2 5.500A10.500 10.500 0 0 1 20.300 6.200H11z" fill="#e2453a" /><path d="M11 11 1.900 5.700A10.500 10.500 0 0 0 9.500 21.400L14.500 13z" fill="#3ea553" /><circle cx="11" cy="11" r="5" fill="#fff" /><circle cx="11" cy="11" r="4" fill="#4a86ea" /></svg>
    )],
    ['Firefox', (
        <svg viewBox="0 0 22 22" className="w-[22px] h-[22px]"><path d="M14 0c3 2 7 6 7 12a10 10 0 0 1-20 0c0-3 1-5 2-7l1 2c1-2 2-3 3-4v3c2-1 5 0 6 0 2-2 1-4 1-6z" fill="#ff8b2b" /><path d="M14 0c3 2 7 6 7 12l-3 5c1-5-1-9-4-11 1-2 0-4 0-6z" fill="#ffd23e" /><path d="M1 12c0 6 5 10 10 10 4 0 7-2 9-5-8 5-15 1-16-6z" fill="#f0386a" /><circle cx="11.500" cy="12" r="4.500" fill="#7542c8" /></svg>
    )],
    ['Premiere Pro', <span className="flex w-[21px] h-5 items-center justify-center border-2 border-[#b063d8] bg-[#2a0a3a] text-[12px] text-[#d79af2]">Pr</span>],
    ['Audition', <span className="flex w-[21px] h-5 items-center justify-center border-2 border-[#2bb594] bg-[#06302c] text-[12px] text-[#3fe0b6]">Au</span>],
    ['FL Studio', (
        <svg viewBox="0 0 22 22" className="w-[22px] h-[22px]"><circle cx="11" cy="11" r="10.500" fill="#2c3038" /><path d="M6 9c0-4 9-4 10 0 0 5-4 10-6 12-2-2-4-7-4-12z" fill="#f58a1e" /><path d="M8 8c1-2 3-2 4-1l-1 8z" fill="#ffd060" /><path d="M10 7C9 4 11 1 13 1l-1 3 3-1c0 3-3 4-5 4z" fill="#6aa83a" /></svg>
    ), true],
    ['Bandicam', (
        <svg viewBox="0 0 22 22" className="w-[22px] h-[22px]"><circle cx="11" cy="11" r="9.800" fill="#141414" stroke="#f2f2f2" strokeWidth="1.600" /><circle cx="11" cy="11" r="6" fill="#ee2a22" /></svg>
    )]
];

const Taskbar = () => (
    <footer className="flex h-9 shrink-0 items-stretch bg-[#27211c] text-[#ece9e6] [font-family:'Open_Sans',sans-serif]">
        <button aria-label="Start" className="flex w-[45px] items-center justify-center">
            <svg viewBox="0 0 16 16" className="w-[15px] h-[15px]" fill="#fff"><path d="M0 2.200 6.800 1.200v6.400H0zM7.600 1.100 16 0v7.600H7.600zM0 8.400h6.800v6.400L0 13.800zM7.600 8.400H16V16l-8.400-1.200z" /></svg>
        </button>
        <button aria-label="Search" className="flex w-[45px] items-center justify-center"><Search className="w-4 h-4 -scale-x-100" strokeWidth={1.800} /></button>
        <button aria-label="Task view" className="flex w-[45px] items-center justify-center">
            <svg viewBox="0 0 16 16" className="w-4 h-4" fill="none" stroke="currentColor" strokeWidth="1.300"><path d="M1 5h9v6H1zM1 0v2.500h9V0M1 16v-2.500h9V16M14 0v4M14 9v7" /><path d="M12.500 5h3v2.500h-3z" fill="currentColor" stroke="none" /></svg>
        </button>
        <div className="flex w-[22px] items-center justify-start gap-[3px] pl-[6px]"><span className="h-4 w-px bg-[#5b544e]" /><span className="h-4 w-px bg-[#5b544e]" /></div>
        {TASKS.map(([label, icon, active]) => (
            <button key={label} aria-label={label} className={`flex w-[46px] items-center justify-center ${active ? 'bg-[#4b4743]' : ''}`}>{icon}</button>
        ))}
        <div className="ml-auto flex items-center">
            <div className="mr-2 flex gap-[3px]"><span className="h-4 w-px bg-[#5b544e]" /><span className="h-4 w-px bg-[#5b544e]" /></div>
            <button className="w-7 text-[12px]">EN</button>
            <svg viewBox="0 0 12 14" className="w-3 h-[14px]" aria-label="Language bar"><path d="M2 2h10v11H1z" fill="#d5e4f4" /><path d="M1 6l3 4L9 0" stroke="#d8322a" strokeWidth="2" fill="none" /></svg>
            <button aria-label="Help" className="ml-[9px] flex w-[14px] h-[14px] items-center justify-center rounded-full border border-[#c7cdf0] bg-[#1c2aa8] text-[10px] font-bold text-white">?</button>
            <svg viewBox="0 0 15 15" className="ml-[42px] w-[15px] h-[15px]" fill="none" stroke="currentColor" strokeWidth="1.300" aria-label="People">
                <circle cx="10.500" cy="3" r="2.300" /><path d="M7 8.500c1-3 6-3 7 0" /><circle cx="5" cy="7.500" r="2.300" /><path d="M1 14c.5-4.500 7-4.500 8 0" />
            </svg>
            <ChevronUp className="ml-5 w-[14px] h-[14px]" />
            <svg viewBox="0 0 14 14" className="ml-[10px] w-[14px] h-[14px]" fill="none" stroke="#c9c5c1" strokeWidth="1.300" aria-label="Network">
                <path d="M1 13A12 12 0 0 1 13 2M4 13a9 9 0 0 1 9-8M7 13a6 6 0 0 1 6-5M10 13a3 3 0 0 1 3-2" />
            </svg>
            <Cloud className="ml-[7px] w-4 h-4" fill="currentColor" />
            <BatteryCharging className="ml-[6px] w-4 h-4" />
            <Volume2 className="ml-[7px] w-4 h-4" strokeWidth={1.800} />
            <div className="w-[64px] text-center text-[11px] leading-[17px]"><div>4:03 PM</div><div className="whitespace-nowrap">05-May-20</div></div>
            <button aria-label="Notifications" className="mr-4 ml-3"><MessageSquare className="w-[17px] h-[17px]" strokeWidth={1.600} /></button>
        </div>
    </footer>
);

const App = () => (
    <div className="flex h-screen flex-col overflow-hidden bg-[#545d65]">
        <TopBar />
        <div className="flex min-h-0 flex-1 pl-[6px] [font-family:'Noto_Sans','Open_Sans',sans-serif]">
            <Browser />
            <Playlist />
        </div>
        <Taskbar />
    </div>
);

export default App;
